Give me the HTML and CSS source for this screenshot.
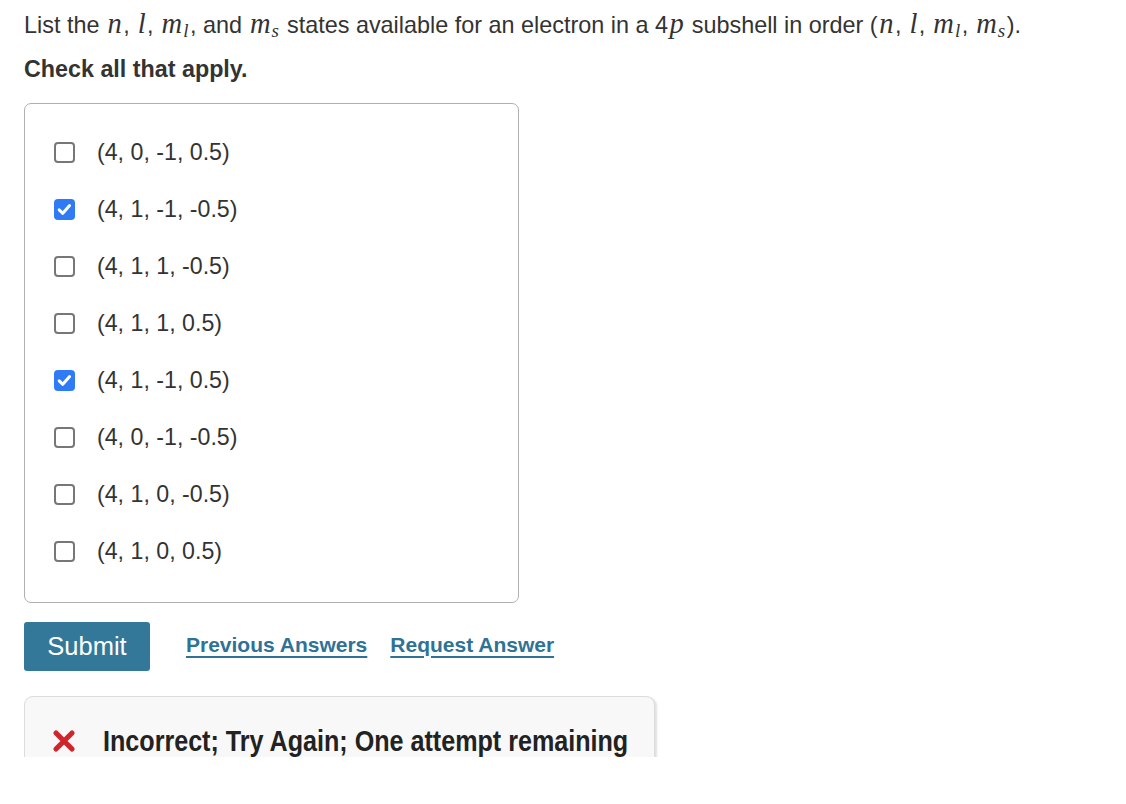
FILE: index.html
```html
<!DOCTYPE html>
<html>
<head>
<meta charset="utf-8">
<link rel="stylesheet" href="styles.css">
</head>
<body>
<div class="page">
  <p class="prompt">List the <span class="m">n</span>, <span class="m">l</span>, <span class="m">m<sub>l</sub></span>, and <span class="m">m<sub>s</sub></span> states available for an electron in a 4<span class="m">p</span> subshell in order (<span class="m">n</span>, <span class="m">l</span>, <span class="m">m<sub>l</sub></span>, <span class="m">m<sub>s</sub></span>).</p>
  <p class="instr">Check all that apply.</p>
  <div class="choices">
    <div class="row"><span class="cb"></span><span class="lbl">(4, 0, -1, 0.5)</span></div>
    <div class="row"><span class="cb on"><svg viewBox="0 0 21 21" width="21" height="21"><path d="M5.2 10.8 L8.8 14.3 L15.6 6.6" fill="none" stroke="#fff" stroke-width="3" stroke-linecap="round" stroke-linejoin="round"/></svg></span><span class="lbl">(4, 1, -1, -0.5)</span></div>
    <div class="row"><span class="cb"></span><span class="lbl">(4, 1, 1, -0.5)</span></div>
    <div class="row"><span class="cb"></span><span class="lbl">(4, 1, 1, 0.5)</span></div>
    <div class="row"><span class="cb on"><svg viewBox="0 0 21 21" width="21" height="21"><path d="M5.2 10.8 L8.8 14.3 L15.6 6.6" fill="none" stroke="#fff" stroke-width="3" stroke-linecap="round" stroke-linejoin="round"/></svg></span><span class="lbl">(4, 1, -1, 0.5)</span></div>
    <div class="row"><span class="cb"></span><span class="lbl">(4, 0, -1, -0.5)</span></div>
    <div class="row"><span class="cb"></span><span class="lbl">(4, 1, 0, -0.5)</span></div>
    <div class="row"><span class="cb"></span><span class="lbl">(4, 1, 0, 0.5)</span></div>
  </div>
  <div class="actions">
    <button class="submit">Submit</button>
    <a class="link" href="#">Previous Answers</a>
    <a class="link" href="#">Request Answer</a>
  </div>
  <div class="feedback">
    <svg class="xicon" viewBox="0 0 24 24" width="24" height="24"><path d="M4 4 L20 20 M20 4 L4 20" stroke="#d0252d" stroke-width="5.2" stroke-linecap="round"/></svg>
    <span class="fbtext">Incorrect; Try Again; One attempt remaining</span>
  </div>
</div>
</body>
</html>
```
FILE: styles.css
```css
html, body {
  margin: 0;
  padding: 0;
  background: #fff;
}
.page {
  height: 757px;
  overflow: hidden;
  padding-left: 24px;
  font-family: "Liberation Sans", Arial, sans-serif;
  color: #333;
  box-sizing: border-box;
}
.prompt {
  margin: 0;
  padding-top: 9px;
  font-size: 23.4px;
  line-height: 30px;
  white-space: nowrap;
}
.m {
  font-family: "Liberation Serif", "Times New Roman", serif;
  font-style: italic;
  font-size: 28.5px;
  padding: 0 1.5px;
}
.m sub {
  font-size: 19px;
  vertical-align: -4px;
  line-height: 0;
  margin-left: 1px;
}
.instr {
  margin: 14px 0 0 0;
  font-size: 23.3px;
  font-weight: bold;
  line-height: 30px;
}
.choices {
  margin-top: 19px;
  width: 495px;
  box-sizing: border-box;
  border: 1px solid #b0b0b0;
  border-radius: 7px;
  padding: 20px 0 22px 29px;
  display: flex;
  flex-direction: column;
}
.row {
  height: 57px;
  display: flex;
  align-items: center;
  gap: 22px;
}
.cb {
  width: 21px;
  height: 21px;
  box-sizing: border-box;
  border: 2px solid #777;
  border-radius: 4px;
  display: flex;
  flex: none;
}
.cb.on {
  border: none;
  background: #2f7bf5;
}
.lbl {
  font-size: 23.2px;
}
.actions {
  margin-top: 19px;
  display: flex;
  align-items: center;
}
.submit {
  width: 126px;
  height: 49px;
  border: none;
  border-radius: 3px;
  background: #337899;
  color: #fff;
  font-family: "Liberation Sans", Arial, sans-serif;
  font-size: 25.5px;
  padding: 0;
  margin-right: 36px;
}
.link {
  font-size: 21px;
  font-weight: bold;
  color: #2e7396;
  text-decoration: underline;
  text-underline-offset: 4px;
  text-decoration-thickness: 2px;
  margin-right: 23px;
  margin-top: -4px;
}
.feedback {
  margin-top: 25px;
  width: 631px;
  height: 100px;
  box-sizing: border-box;
  border: 1px solid #dcdcdc;
  border-radius: 9px;
  background: #f8f8f8;
  box-shadow: 2px 1px 2px rgba(0,0,0,0.12);
  display: flex;
  align-items: flex-start;
  padding: 29px 0 0 27px;
  gap: 27px;
}
.xicon {
  flex: none;
  margin-top: 3px;
}
.fbtext {
  display: inline-block;
  font-family: "Liberation Sans", Arial, sans-serif;
  font-weight: bold;
  font-size: 29px;
  line-height: 30px;
  color: #222;
  white-space: nowrap;
  transform: scaleX(0.866);
  transform-origin: left center;
}
```
